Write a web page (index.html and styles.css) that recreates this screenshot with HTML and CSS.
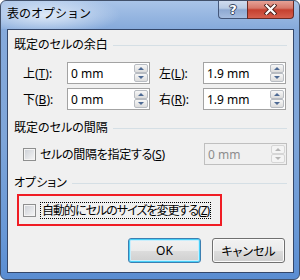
FILE: index.html
```html
<!DOCTYPE html>
<html>
<head>
    <title>表のオプション</title>
    <link rel="stylesheet" href="styles.css">
</head>
<body>
    <div class="window">
        <div class="titlebar">
            <span class="title">表のオプション</span>
            <div class="caption-buttons">
                <span class="cap-btn help">?</span>
                <span class="cap-btn close">
                    <svg width="13" height="11" viewBox="0 0 13 11">
                        <path d="M2.5 1.5 L10.5 9.5 M10.5 1.5 L2.5 9.5" stroke="#4a1f1a" stroke-width="4" stroke-linecap="square"/>
                        <path d="M2.5 1.5 L10.5 9.5 M10.5 1.5 L2.5 9.5" stroke="#ffffff" stroke-width="2.2" stroke-linecap="square"/>
                    </svg>
                </span>
            </div>
        </div>
        <div class="client">
            <div class="group-head">既定のセルの余白</div>
            <div class="margins">
                <div class="field">
                    <span class="field-label">上(<u>T</u>):</span>
                    <div class="spinbox">
                        <span class="value">0 mm</span>
                        <span class="spin"><span class="up"></span><span class="down"></span></span>
                    </div>
                </div>
                <div class="field">
                    <span class="field-label">左(<u>L</u>):</span>
                    <div class="spinbox">
                        <span class="value">1.9 mm</span>
                        <span class="spin"><span class="up"></span><span class="down"></span></span>
                    </div>
                </div>
                <div class="field">
                    <span class="field-label">下(<u>B</u>):</span>
                    <div class="spinbox">
                        <span class="value">0 mm</span>
                        <span class="spin"><span class="up"></span><span class="down"></span></span>
                    </div>
                </div>
                <div class="field">
                    <span class="field-label">右(<u>R</u>):</span>
                    <div class="spinbox">
                        <span class="value">1.9 mm</span>
                        <span class="spin"><span class="up"></span><span class="down"></span></span>
                    </div>
                </div>
            </div>

            <div class="group-head gap-head">既定のセルの間隔</div>
            <div class="spacing-row">
                <span class="checkbox"></span>
                <span class="check-label">セルの間隔を指定する(<u>S</u>)</span>
                <div class="spinbox disabled">
                    <span class="value">0 mm</span>
                    <span class="spin"><span class="up"></span><span class="down"></span></span>
                </div>
            </div>

            <div class="group-head option-head">オプション</div>
            <div class="highlight">
                <span class="checkbox"></span>
                <span class="check-label focused">自動的にセルのサイズを変更する(<u>Z</u>)</span>
            </div>

            <div class="buttons">
                <span class="button default">OK</span>
                <span class="button">キャンセル</span>
            </div>
        </div>
    </div>
</body>
</html>
```

FILE: styles.css
```css
body {
    margin: 0;
    font-family: "Noto Sans", "Noto Sans CJK JP", sans-serif;
    font-size: 12px;
    color: #000;
    font-feature-settings: "palt";
}
.window {
    width: 300px;
    height: 280px;
    box-sizing: border-box;
    border: 1px solid #41506a;
    border-radius: 6px;
    background: linear-gradient(to bottom, #a9c4e8 0%, #86aadb 10%, #7ea5d9 50%, #6797d6 85%, #5a8dd2 100%);
    display: flex;
    flex-direction: column;
    overflow: hidden;
}
.titlebar {
    height: 28px;
    flex: none;
    display: flex;
    align-items: flex-start;
    padding: 0 5px 0 6px;
    background: radial-gradient(ellipse 75px 20px at 45px 14px, rgba(226, 236, 249, 0.95), rgba(226, 236, 249, 0));
}
.title {
    line-height: 26px;
    font-size: 12px;
    font-feature-settings: normal;
    color: #000;
}
.caption-buttons {
    margin-left: auto;
    margin-top: -1px;
    display: flex;
    height: 19px;
}
.cap-btn {
    box-sizing: border-box;
    height: 19px;
    display: flex;
    align-items: center;
    justify-content: center;
    border: 1px solid #44577a;
    border-top: none;
}
.help {
    width: 29px;
    border-radius: 0 0 0 4px;
    border-right: none;
    background: linear-gradient(to bottom, #d3def0 0%, #b9cbe4 45%, #8ea9d2 55%, #a6bde0 100%);
    color: #fff;
    font-family: "DejaVu Sans", sans-serif;
    font-weight: bold;
    font-size: 13px;
    text-shadow: 0 0 1px #2c3a55, 1px 0 0 #3b4b68, -1px 0 0 #3b4b68, 0 1px 0 #3b4b68, 0 -1px 0 #3b4b68;
}
.close {
    width: 47px;
    border-radius: 0 0 4px 0;
    border-color: #6a2a24;
    background: linear-gradient(to bottom, #e8a79c 0%, #d7786a 45%, #c5402f 55%, #d5604e 100%);
}
.client {
    flex: 1;
    margin: 0 5px 6px 6px;
    border: 1px solid #34476a;
    background: #f0f0f0;
    padding: 7px 6px 0 6px;
}
.group-head {
    display: flex;
    align-items: center;
    line-height: 16px;
}
.group-head::after {
    content: "";
    flex: 1;
    height: 1px;
    margin-left: 5px;
    background: #d5dfe5;
}
.margins {
    margin-top: 9px;
    padding-left: 9px;
    display: grid;
    grid-template-columns: 127px 127px;
    column-gap: 9px;
    row-gap: 4px;
}
.field {
    display: flex;
    align-items: center;
}
.field-label {
    width: 44px;
    flex: none;
}
.spinbox {
    box-sizing: border-box;
    width: 83px;
    height: 22px;
    border: 1px solid #a3a3a3;
    background: #fff;
    display: flex;
    align-items: center;
    padding: 1px 1px 1px 3px;
}
.spinbox .value {
    flex: 1;
}
.spin {
    align-self: stretch;
    width: 14px;
    display: flex;
    flex-direction: column;
}
.spin span {
    flex: 1;
    box-sizing: border-box;
    border: 1px solid #b8bcc2;
    border-radius: 2px;
    background: linear-gradient(to bottom, #f7f7f7, #dcdcdc);
    display: flex;
    align-items: center;
    justify-content: center;
}
.spin .up::after {
    content: "";
    border-left: 3px solid transparent;
    border-right: 3px solid transparent;
    border-bottom: 3px solid #4e6a94;
}
.spin .down::after {
    content: "";
    border-left: 3px solid transparent;
    border-right: 3px solid transparent;
    border-top: 3px solid #4e6a94;
}
.spinbox.disabled {
    background: #f0f0f0;
    border-color: #bfbfbf;
    color: #8d8d8d;
}
.spinbox.disabled .spin span {
    border-color: #d6d6d6;
    background: #f4f4f4;
}
.spinbox.disabled .spin .up::after {
    border-bottom-color: #b5b5b5;
}
.spinbox.disabled .spin .down::after {
    border-top-color: #b5b5b5;
}
.gap-head {
    margin-top: 10px;
}
.spacing-row {
    margin-top: 7px;
    padding-left: 9px;
    display: flex;
    align-items: center;
}
.spacing-row .check-label {
    letter-spacing: -0.3px;
}
.spacing-row .spinbox {
    margin-left: auto;
}
.checkbox {
    box-sizing: border-box;
    width: 13px;
    height: 13px;
    flex: none;
    border: 1px solid #8e8f8f;
    background: linear-gradient(135deg, #cbcfd5, #f6f6f6);
    box-shadow: inset 0 0 0 1px #f4f4f4;
    margin-right: 4px;
}
.check-label {
    line-height: 15px;
    white-space: nowrap;
}
.option-head {
    margin-top: 10px;
}
.highlight {
    margin: 3px 0 0 3px;
    width: 205px;
    height: 32px;
    box-sizing: border-box;
    border: 2px solid #f01c24;
    padding-left: 4px;
    display: flex;
    align-items: center;
}
.focused {
    border: 1px dotted #000;
    padding: 0 1px 0 1px;
    letter-spacing: -1px;
}
.buttons {
    margin-top: 12px;
    margin-right: 2px;
    display: flex;
    justify-content: flex-end;
    gap: 11px;
}
.button {
    box-sizing: border-box;
    width: 73px;
    height: 25px;
    border: 1px solid #707070;
    border-radius: 3px;
    background: linear-gradient(to bottom, #f2f2f2 0%, #ebebeb 50%, #dddddd 50%, #cfcfcf 100%);
    box-shadow: inset 0 0 0 1px #fbfbfb;
    display: flex;
    align-items: center;
    justify-content: center;
}
.button.default {
    border-color: #3c7fb1;
    box-shadow: inset 0 0 0 1px #48d0f8, inset 0 0 0 2px #c9eefc;
}
```
